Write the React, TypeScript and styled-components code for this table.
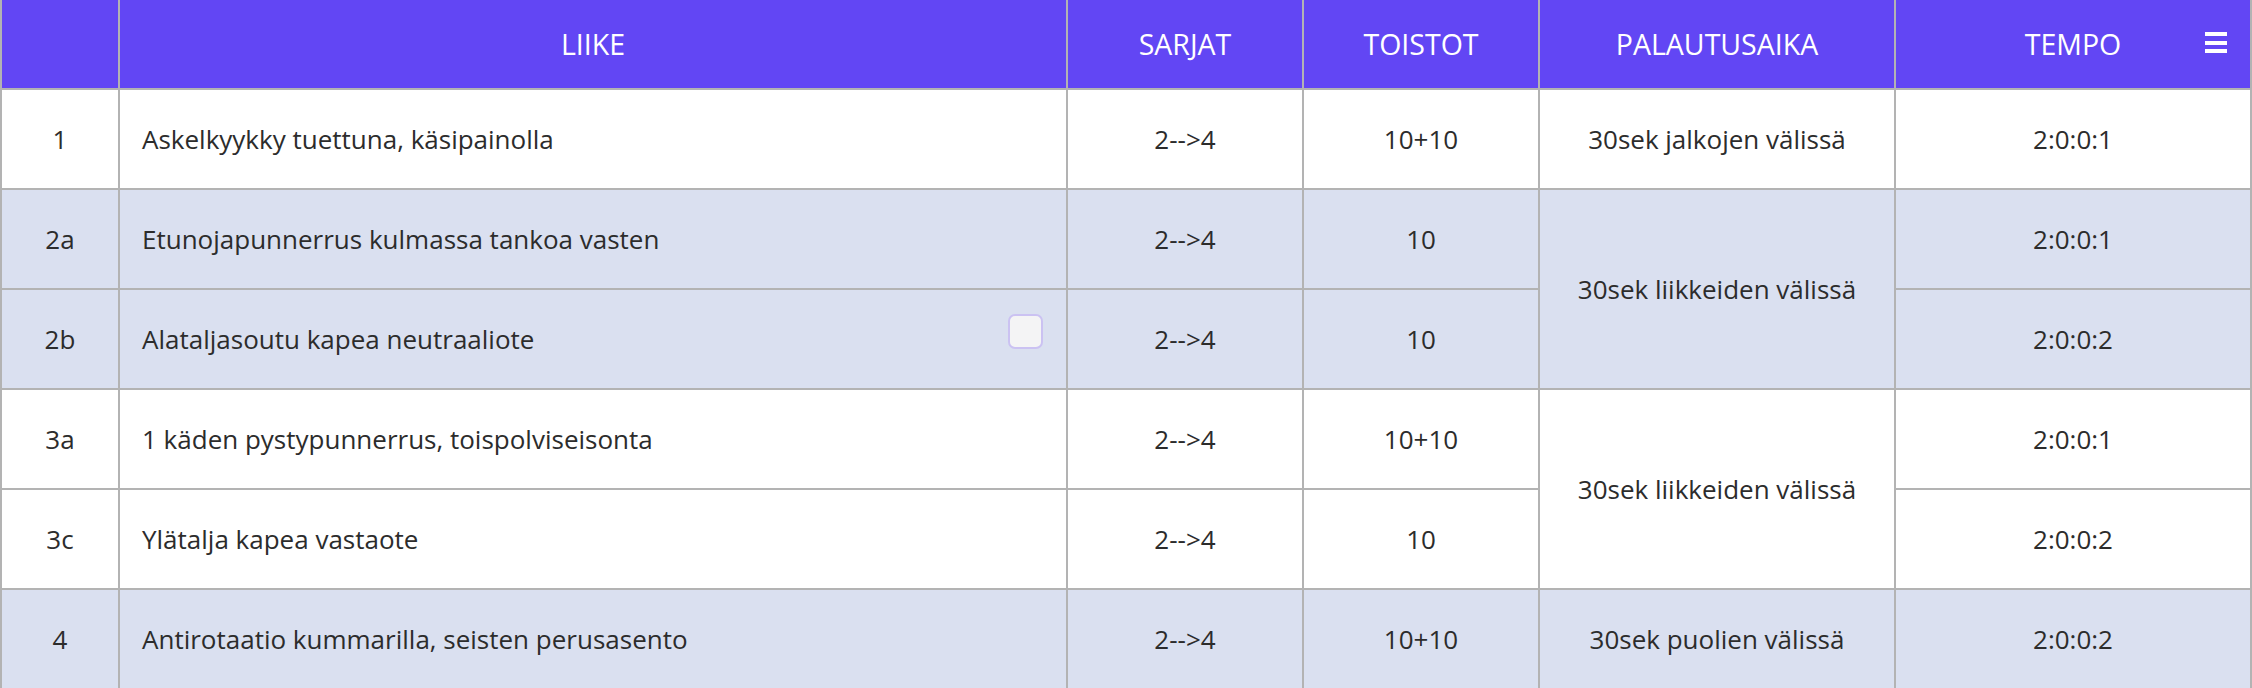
import React from "react";
import styled, { createGlobalStyle } from "styled-components";

const GlobalStyle = createGlobalStyle`
  html, body {
    margin: 0;
    padding: 0;
    background: #ffffff;
    overflow: hidden;
  }
  body {
    font-family: "Open Sans", "Noto Sans", sans-serif;
  }
`;

const BORDER = "2px solid #b3b3b3";

const Table = styled.table`
  width: 2252px;
  table-layout: fixed;
  border-collapse: separate;
  border-spacing: 0;
  font-family: "Open Sans", "Noto Sans", sans-serif;
  font-size: 26px;
  color: #2c2c2c;
`;

const HeadCell = styled.th<{ $first?: boolean }>`
  position: relative;
  height: 88px;
  padding: 0;
  background: #6246f4;
  color: #ffffff;
  font-size: 28.5px;
  font-weight: 400;
  text-align: center;
  text-transform: uppercase;
  border-right: ${BORDER};
  border-bottom: ${BORDER};
  border-left: ${(p) => (p.$first ? BORDER : "none")};
`;

const Cell = styled.td<{ $first?: boolean; $left?: boolean; $tone: "white" | "blue" }>`
  position: relative;
  height: 98px;
  padding: ${(p) => (p.$left ? "0 22px" : "0")};
  background: ${(p) => (p.$tone === "blue" ? "#dae0f0" : "#ffffff")};
  text-align: ${(p) => (p.$left ? "left" : "center")};
  vertical-align: middle;
  border-right: ${BORDER};
  border-bottom: ${BORDER};
  border-left: ${(p) => (p.$first ? BORDER : "none")};
  white-space: nowrap;
`;

const MenuButton = styled.span`
  position: absolute;
  top: 32px;
  right: 23px;
  width: 22px;
  display: flex;
  flex-direction: column;
  gap: 4.5px;
`;

const MenuBar = styled.span`
  display: block;
  height: 4px;
  background: #ffffff;
`;

const CheckBox = styled.span`
  position: absolute;
  top: 24px;
  right: 23px;
  width: 31px;
  height: 31px;
  border: 2px solid #cbc2f2;
  border-radius: 7px;
  background: #f4f4f5;
`;

type Tone = "white" | "blue";

interface Row {
  no: string;
  name: string;
  sets: string;
  reps: string;
  rest?: { text: string; span: number };
  tempo: string;
  tone: Tone;
  checkbox?: boolean;
}

const rows: Row[] = [
  { no: "1", name: "Askelkyykky tuettuna, käsipainolla", sets: "2-->4", reps: "10+10", rest: { text: "30sek jalkojen välissä", span: 1 }, tempo: "2:0:0:1", tone: "white" },
  { no: "2a", name: "Etunojapunnerrus kulmassa tankoa vasten", sets: "2-->4", reps: "10", rest: { text: "30sek liikkeiden välissä", span: 2 }, tempo: "2:0:0:1", tone: "blue" },
  { no: "2b", name: "Alataljasoutu kapea neutraaliote", sets: "2-->4", reps: "10", tempo: "2:0:0:2", tone: "blue", checkbox: true },
  { no: "3a", name: "1 käden pystypunnerrus, toispolviseisonta", sets: "2-->4", reps: "10+10", rest: { text: "30sek liikkeiden välissä", span: 2 }, tempo: "2:0:0:1", tone: "white" },
  { no: "3c", name: "Ylätalja kapea vastaote", sets: "2-->4", reps: "10", tempo: "2:0:0:2", tone: "white" },
  { no: "4", name: "Antirotaatio kummarilla, seisten perusasento", sets: "2-->4", reps: "10+10", rest: { text: "30sek puolien välissä", span: 1 }, tempo: "2:0:0:2", tone: "blue" },
];

const widths = [120, 948, 236, 236, 356, 356];

export default function App() {
  return (
    <>
      <GlobalStyle />
      <Table>
        <colgroup>
          {widths.map((w, i) => (
            <col key={i} style={{ width: w }} />
          ))}
        </colgroup>
        <thead>
          <tr>
            <HeadCell $first />
            <HeadCell>Liike</HeadCell>
            <HeadCell>Sarjat</HeadCell>
            <HeadCell>Toistot</HeadCell>
            <HeadCell>Palautusaika</HeadCell>
            <HeadCell>
              Tempo
              <MenuButton>
                <MenuBar />
                <MenuBar />
                <MenuBar />
              </MenuButton>
            </HeadCell>
          </tr>
        </thead>
        <tbody>
          {rows.map((r) => (
            <tr key={r.no}>
              <Cell $first $tone={r.tone}>{r.no}</Cell>
              <Cell $left $tone={r.tone}>
                {r.name}
                {r.checkbox && <CheckBox />}
              </Cell>
              <Cell $tone={r.tone}>{r.sets}</Cell>
              <Cell $tone={r.tone}>{r.reps}</Cell>
              {r.rest && (
                <Cell $tone={r.tone} rowSpan={r.rest.span}>
                  {r.rest.text}
                </Cell>
              )}
              <Cell $tone={r.tone}>{r.tempo}</Cell>
            </tr>
          ))}
        </tbody>
      </Table>
    </>
  );
}
